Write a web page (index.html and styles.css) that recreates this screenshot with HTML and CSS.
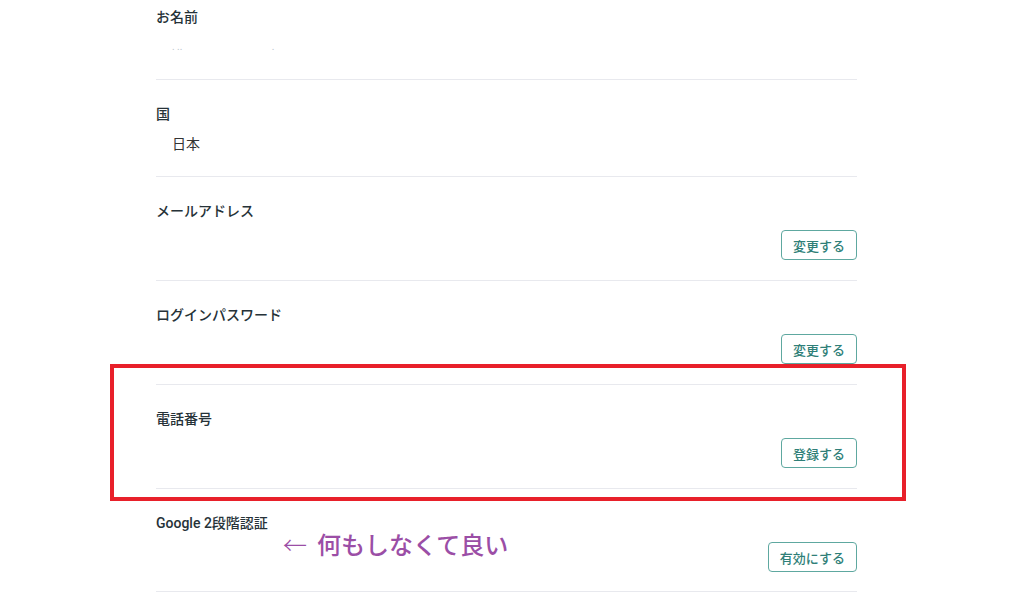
FILE: index.html
```html
<!DOCTYPE html>
<html lang="ja">
<head>
    <meta charset="UTF-8">
    <title>アカウント設定</title>
    <link rel="stylesheet" href="styles.css">
</head>
<body>

    <div id="settings">
        <div class="row row-first">
            <div class="label">お名前</div>
            <div class="value value-hidden">. .. &nbsp;&nbsp;&nbsp;&nbsp;&nbsp;&nbsp;&nbsp;&nbsp;&nbsp;&nbsp;&nbsp;&nbsp;&nbsp;&nbsp;&nbsp;&nbsp;&nbsp;&nbsp;&nbsp;&nbsp;&nbsp;&nbsp;&nbsp;&nbsp;&nbsp;&nbsp;&nbsp;&nbsp;&nbsp;&nbsp;&nbsp;&nbsp;&nbsp;&nbsp; .</div>
        </div>

        <div class="row row-value">
            <div class="label">国</div>
            <div class="value">日本</div>
        </div>

        <div class="row">
            <div class="label">メールアドレス</div>
            <div class="actions"><button type="button">変更する</button></div>
        </div>

        <div class="row">
            <div class="label">ログインパスワード</div>
            <div class="actions"><button type="button">変更する</button></div>
        </div>

        <div class="row">
            <div class="label">電話番号</div>
            <div class="actions"><button type="button">登録する</button></div>
        </div>

        <div class="row row-last">
            <div class="label">Google 2段階認証</div>
            <div class="actions"><button type="button">有効にする</button></div>
        </div>
    </div>

    <!-- 注釈 -->
    <div class="mark-box"></div>
    <div class="mark-note"><span class="mark-arrow">←</span>何もしなくて良い</div>

</body>
</html>
```

FILE: styles.css
```css
body {
    font-family: 'Roboto', 'Noto Sans CJK JP', sans-serif;
    background-color: #fff;
    margin: 0;
    padding: 0;
    color: #263238;
}

#settings {
    width: 701px;
    margin-left: 156px;
}

.row {
    padding: 24px 0 20px;
    border-bottom: 1px solid #e8e9ee;
}

.row-first {
    padding-top: 7px;
    padding-bottom: 22px;
}

.row-value {
    padding-bottom: 22px;
}

.row-last {
    padding-bottom: 19px;
}

.label {
    font-size: 14px;
    font-weight: 500;
    line-height: 20px;
}

.value {
    margin-top: 10px;
    padding-left: 16px;
    font-size: 14px;
    line-height: 20px;
    color: #333;
}

.value-hidden {
    color: #b9c4cc;
    font-size: 10px;
    white-space: pre;
}

.actions {
    display: flex;
    justify-content: flex-end;
    margin-top: 9px;
}

button {
    height: 30px;
    padding: 0 11px;
    background-color: #fff;
    color: #2f7f78;
    border: 1px solid #5ea8a0;
    border-radius: 4px;
    font-family: 'Roboto', 'Noto Sans CJK JP', sans-serif;
    font-size: 13px;
    font-weight: 500;
    cursor: pointer;
}

.mark-box {
    position: absolute;
    left: 110px;
    top: 364px;
    width: 788px;
    height: 129px;
    border: 4px solid #e8202a;
}

.mark-note {
    position: absolute;
    left: 283px;
    top: 527px;
    color: #9b4ea6;
    font-family: 'Noto Sans CJK JP', sans-serif;
    font-size: 24px;
    font-weight: 500;
    line-height: 34px;
}

.mark-arrow {
    font-weight: 300;
    margin-right: 10px;
}
```
